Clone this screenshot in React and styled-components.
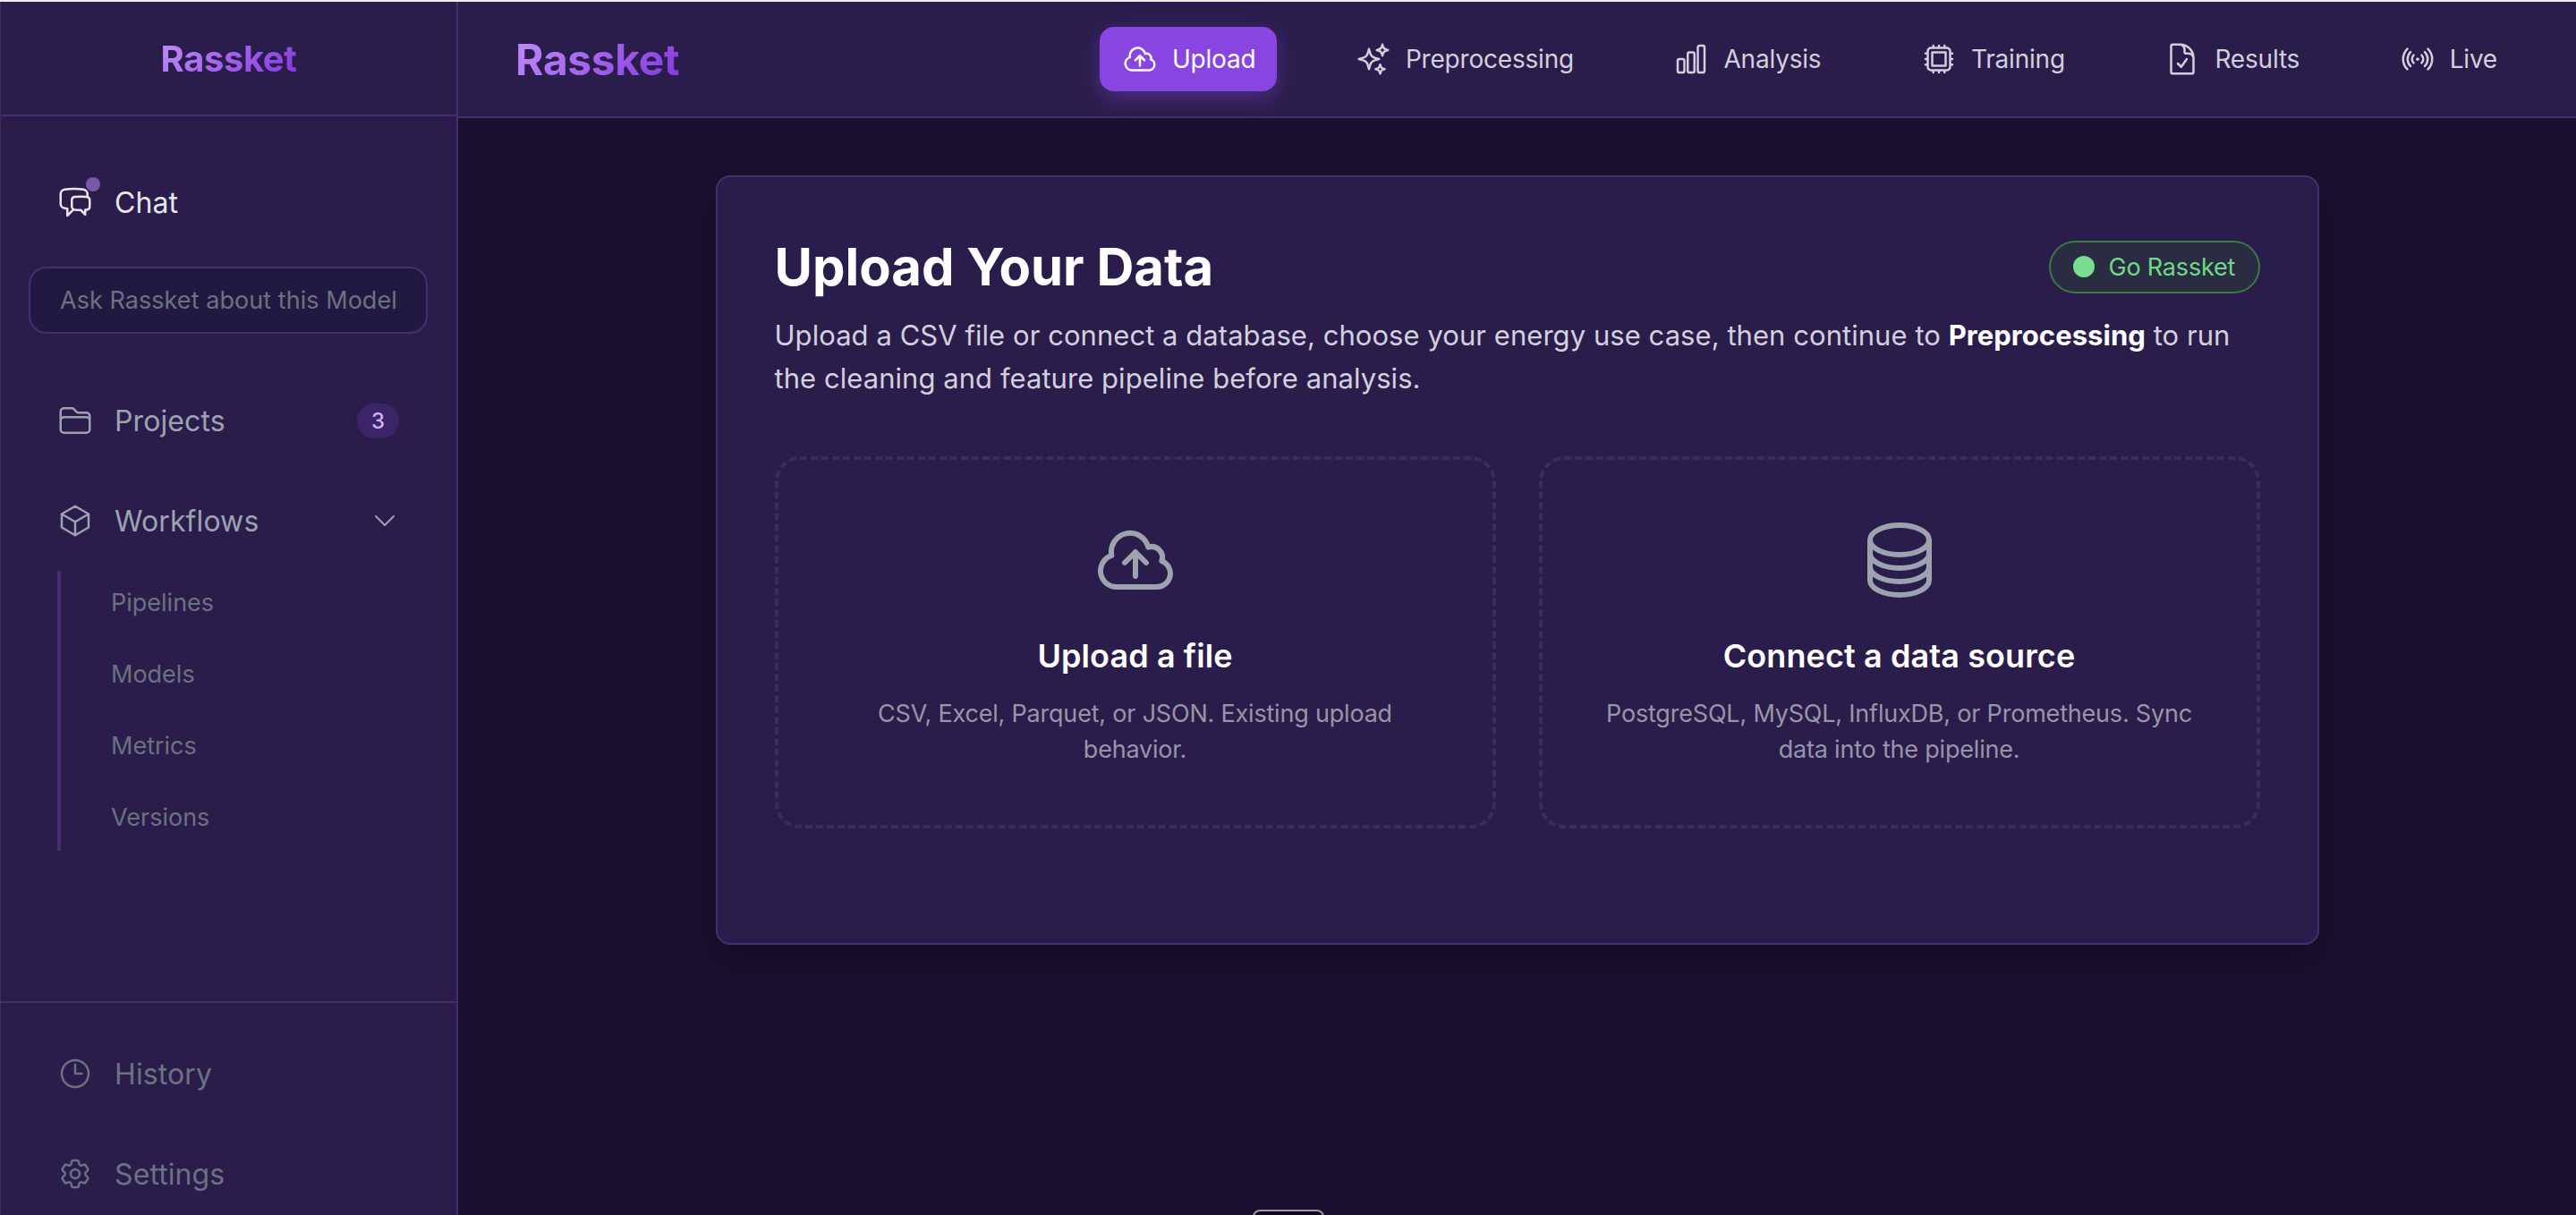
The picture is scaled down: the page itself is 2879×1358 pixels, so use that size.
import React from 'react'
import styled, { createGlobalStyle } from 'styled-components'
import {
  HiOutlineCloudArrowUp,
  HiOutlineSparkles,
  HiOutlineChartBar,
  HiOutlineCpuChip,
  HiOutlineDocumentCheck,
  HiOutlineSignal,
  HiOutlineChatBubbleLeftRight,
  HiOutlineFolder,
  HiOutlineCube,
  HiOutlineChevronDown,
  HiOutlineClock,
  HiOutlineCog6Tooth,
  HiOutlineCircleStack,
} from 'react-icons/hi2'

const GlobalStyle = createGlobalStyle`
  html, body {
    margin: 0;
    padding: 0;
    height: 100%;
    overflow: hidden;
    background: #1a1130;
    font-family: Inter, "Liberation Sans", sans-serif;
  }
  * { box-sizing: border-box; }
`

const Root = styled.div`
  display: flex;
  height: 1358px;
  border-top: 2px solid #ececec;
  overflow: hidden;
`

const Sidebar = styled.aside`
  display: flex;
  flex-direction: column;
  flex: 0 0 512px;
  background: #2a1d4b;
  border-left: 1px solid #3f2a68;
  border-right: 2px solid #472e70;
`

const Brand = styled.div`
  height: 128px;
  display: flex;
  align-items: center;
  justify-content: center;
  border-bottom: 2px solid #472e70;
`

const Logo = styled.span`
  font-size: ${(p) => p.$size}px;
  font-weight: 700;
  letter-spacing: -0.4px;
  background: linear-gradient(135deg, #c08ffa, #8435e0);
  -webkit-background-clip: text;
  background-clip: text;
  color: transparent;
`

const SideRow = styled.div`
  display: flex;
  align-items: center;
  height: 40px;
  margin-left: 63px;
  margin-right: 64px;
  gap: 24px;
  font-size: 32px;
  letter-spacing: 0.1px;
  color: ${(p) => p.$color};
  margin-top: ${(p) => p.$top}px;
`

const IconWrap = styled.span`
  position: relative;
  display: flex;
  flex: 0 0 40px;
`

const Dot = styled.span`
  position: absolute;
  top: -8px;
  right: -8px;
  width: 16px;
  height: 16px;
  border-radius: 50%;
  background: #7a58a8;
`

const AskInput = styled.input`
  display: block;
  height: 75px;
  width: 446px;
  margin: 52px 0 0 31px;
  padding: 0 12px 0 33px;
  border: 2px solid #472e70;
  border-radius: 20px;
  background: #211941;
  font-family: inherit;
  font-size: 27px;
  letter-spacing: 0.05px;
  outline: none;
  &::placeholder { color: #6b7280; opacity: 1; }
`

const Spacer = styled.span`
  flex: 1;
`

const Badge = styled.span`
  display: flex;
  align-items: center;
  justify-content: center;
  width: 47px;
  height: 39px;
  border-radius: 20px;
  background: #3c2469;
  color: #d3b2fa;
  font-size: 24px;
  font-weight: 500;
`

const SubList = styled.div`
  height: 313px;
  margin: 36px 0 0 63px;
  padding: 16px 0 17px 56px;
  border-left: 4px solid #472e70;
  display: flex;
  flex-direction: column;
  gap: 40px;
`

const SubItem = styled.div`
  height: 40px;
  line-height: 40px;
  font-size: 27px;
  color: #6b7280;
`

const SideFooter = styled.div`
  margin-top: auto;
  height: 239px;
  border-top: 2px solid #472e70;
`

const Column = styled.div`
  flex: 1;
  display: flex;
  flex-direction: column;
  min-width: 0;
`

const Header = styled.header`
  flex: 0 0 130px;
  display: flex;
  align-items: center;
  justify-content: space-between;
  padding: 0 64px 0 64px;
  background: #2a1d4b;
  border-bottom: 2px solid #472e70;
`

const Nav = styled.nav`
  display: flex;
  align-items: center;
  gap: 62.5px;
`

const NavItem = styled.a`
  display: flex;
  align-items: center;
  gap: 16px;
  height: 72px;
  padding: 0 24px 0 25px;
  border-radius: 16px;
  font-size: 28px;
  letter-spacing: -0.2px;
  color: ${(p) => (p.$active ? '#fff' : '#d1d0dc')};
  background: ${(p) => (p.$active ? '#8845e0' : 'transparent')};
  box-shadow: ${(p) => (p.$active ? '0 8px 24px rgba(136, 69, 224, 0.4)' : 'none')};
`

const Main = styled.main`
  flex: 1;
  padding-top: 64px;
  background: #1a1130;
`

const Card = styled.section`
  width: 1792px;
  margin: 0 auto;
  padding: 64px 64px 128px;
  background: #2a1d4b;
  border: 2px solid #472e70;
  border-radius: 16px;
  box-shadow: 0 20px 50px rgba(0, 0, 0, 0.25);
`

const TitleRow = styled.div`
  display: flex;
  align-items: center;
  justify-content: space-between;
  height: 72px;
`

const Title = styled.h1`
  margin: 0;
  font-size: 58px;
  line-height: 70px;
  font-weight: 700;
  color: #fff;
`

const Pill = styled.span`
  display: flex;
  align-items: center;
  gap: 16px;
  width: 236px;
  height: 59px;
  padding-left: 25px;
  border: 2px solid #3a7a45;
  border-radius: 30px;
  background: #2a2d42;
  color: #6fd98a;
  font-size: 27px;
  letter-spacing: -0.2px;
`

const PillDot = styled.span`
  width: 24px;
  height: 24px;
  border-radius: 50%;
  background: #79de8f;
`

const Lead = styled.p`
  margin: 17px 0 0;
  font-size: 31px;
  line-height: 48px;
  letter-spacing: 0.05px;
  color: #d1d0dc;
  strong { color: #fff; font-weight: 700; }
`

const SourceGrid = styled.div`
  display: grid;
  grid-template-columns: 1fr 1fr;
  gap: 48px;
  margin-top: 63px;
`

const Source = styled.div`
  display: flex;
  flex-direction: column;
  align-items: center;
  height: 416px;
  padding: 64px 64px 0;
  border: 4px dashed #3a2d5e;
  border-radius: 28px;
  text-align: center;
  color: #9ca3af;
`

const SourceTitle = styled.h3`
  margin: 35px 0 0;
  font-size: 36px;
  line-height: 48px;
  font-weight: 600;
  letter-spacing: 0.1px;
  color: #fff;
`

const SourceText = styled.p`
  margin: 21px 0 0;
  font-size: 27px;
  line-height: 40px;
  letter-spacing: -0.2px;
  color: #9696a8;
`

const DevBadge = styled.div`
  position: absolute;
  left: 1400px;
  top: 1352px;
  width: 80px;
  height: 20px;
  border: 2px solid #a09aa8;
  border-radius: 8px;
  background: #0e0a1c;
`

const tabs = [
  { label: 'Upload', Icon: HiOutlineCloudArrowUp, active: true },
  { label: 'Preprocessing', Icon: HiOutlineSparkles },
  { label: 'Analysis', Icon: HiOutlineChartBar },
  { label: 'Training', Icon: HiOutlineCpuChip },
  { label: 'Results', Icon: HiOutlineDocumentCheck },
  { label: 'Live', Icon: HiOutlineSignal },
]

const App = () => (
  <>
    <GlobalStyle />
    <Root>
      <Sidebar>
        <Brand>
          <Logo $size={40}>Rassket</Logo>
        </Brand>
        <SideRow $color="#e5e7eb" $top={76}>
          <IconWrap>
            <HiOutlineChatBubbleLeftRight size={40} />
            <Dot />
          </IconWrap>
          Chat
        </SideRow>
        <AskInput placeholder="Ask Rassket about this Model" />
        <SideRow $color="#9ca3af" $top={77}>
          <IconWrap><HiOutlineFolder size={40} /></IconWrap>
          Projects
          <Spacer />
          <Badge>3</Badge>
        </SideRow>
        <SideRow $color="#9ca3af" $top={72}>
          <IconWrap><HiOutlineCube size={40} /></IconWrap>
          Workflows
          <Spacer />
          <HiOutlineChevronDown size={32} />
        </SideRow>
        <SubList>
          {['Pipelines', 'Models', 'Metrics', 'Versions'].map((s) => (
            <SubItem key={s}>{s}</SubItem>
          ))}
        </SubList>
        <SideFooter>
          <SideRow $color="#6b7280" $top={59}>
            <IconWrap><HiOutlineClock size={40} /></IconWrap>
            History
          </SideRow>
          <SideRow $color="#6b7280" $top={72}>
            <IconWrap><HiOutlineCog6Tooth size={40} /></IconWrap>
            Settings
          </SideRow>
        </SideFooter>
      </Sidebar>
      <Column>
        <Header>
          <Logo $size={48}>Rassket</Logo>
          <Nav>
            {tabs.map(({ label, Icon, active }) => (
              <NavItem key={label} $active={active}>
                <Icon size={40} />
                {label}
              </NavItem>
            ))}
          </Nav>
        </Header>
        <Main>
          <Card>
            <TitleRow>
              <Title>Upload Your Data</Title>
              <Pill><PillDot />Go Rassket</Pill>
            </TitleRow>
            <Lead>
              Upload a CSV file or connect a database, choose your energy use case, then continue to{' '}
              <strong>Preprocessing</strong> to run
              <br />
              the cleaning and feature pipeline before analysis.
            </Lead>
            <SourceGrid>
              <Source>
                <HiOutlineCloudArrowUp size={96} />
                <SourceTitle>Upload a file</SourceTitle>
                <SourceText>CSV, Excel, Parquet, or JSON. Existing upload behavior.</SourceText>
              </Source>
              <Source>
                <HiOutlineCircleStack size={96} />
                <SourceTitle>Connect a data source</SourceTitle>
                <SourceText>PostgreSQL, MySQL, InfluxDB, or Prometheus. Sync data into the pipeline.</SourceText>
              </Source>
            </SourceGrid>
          </Card>
        </Main>
      </Column>
      <DevBadge />
    </Root>
  </>
)

export default App
